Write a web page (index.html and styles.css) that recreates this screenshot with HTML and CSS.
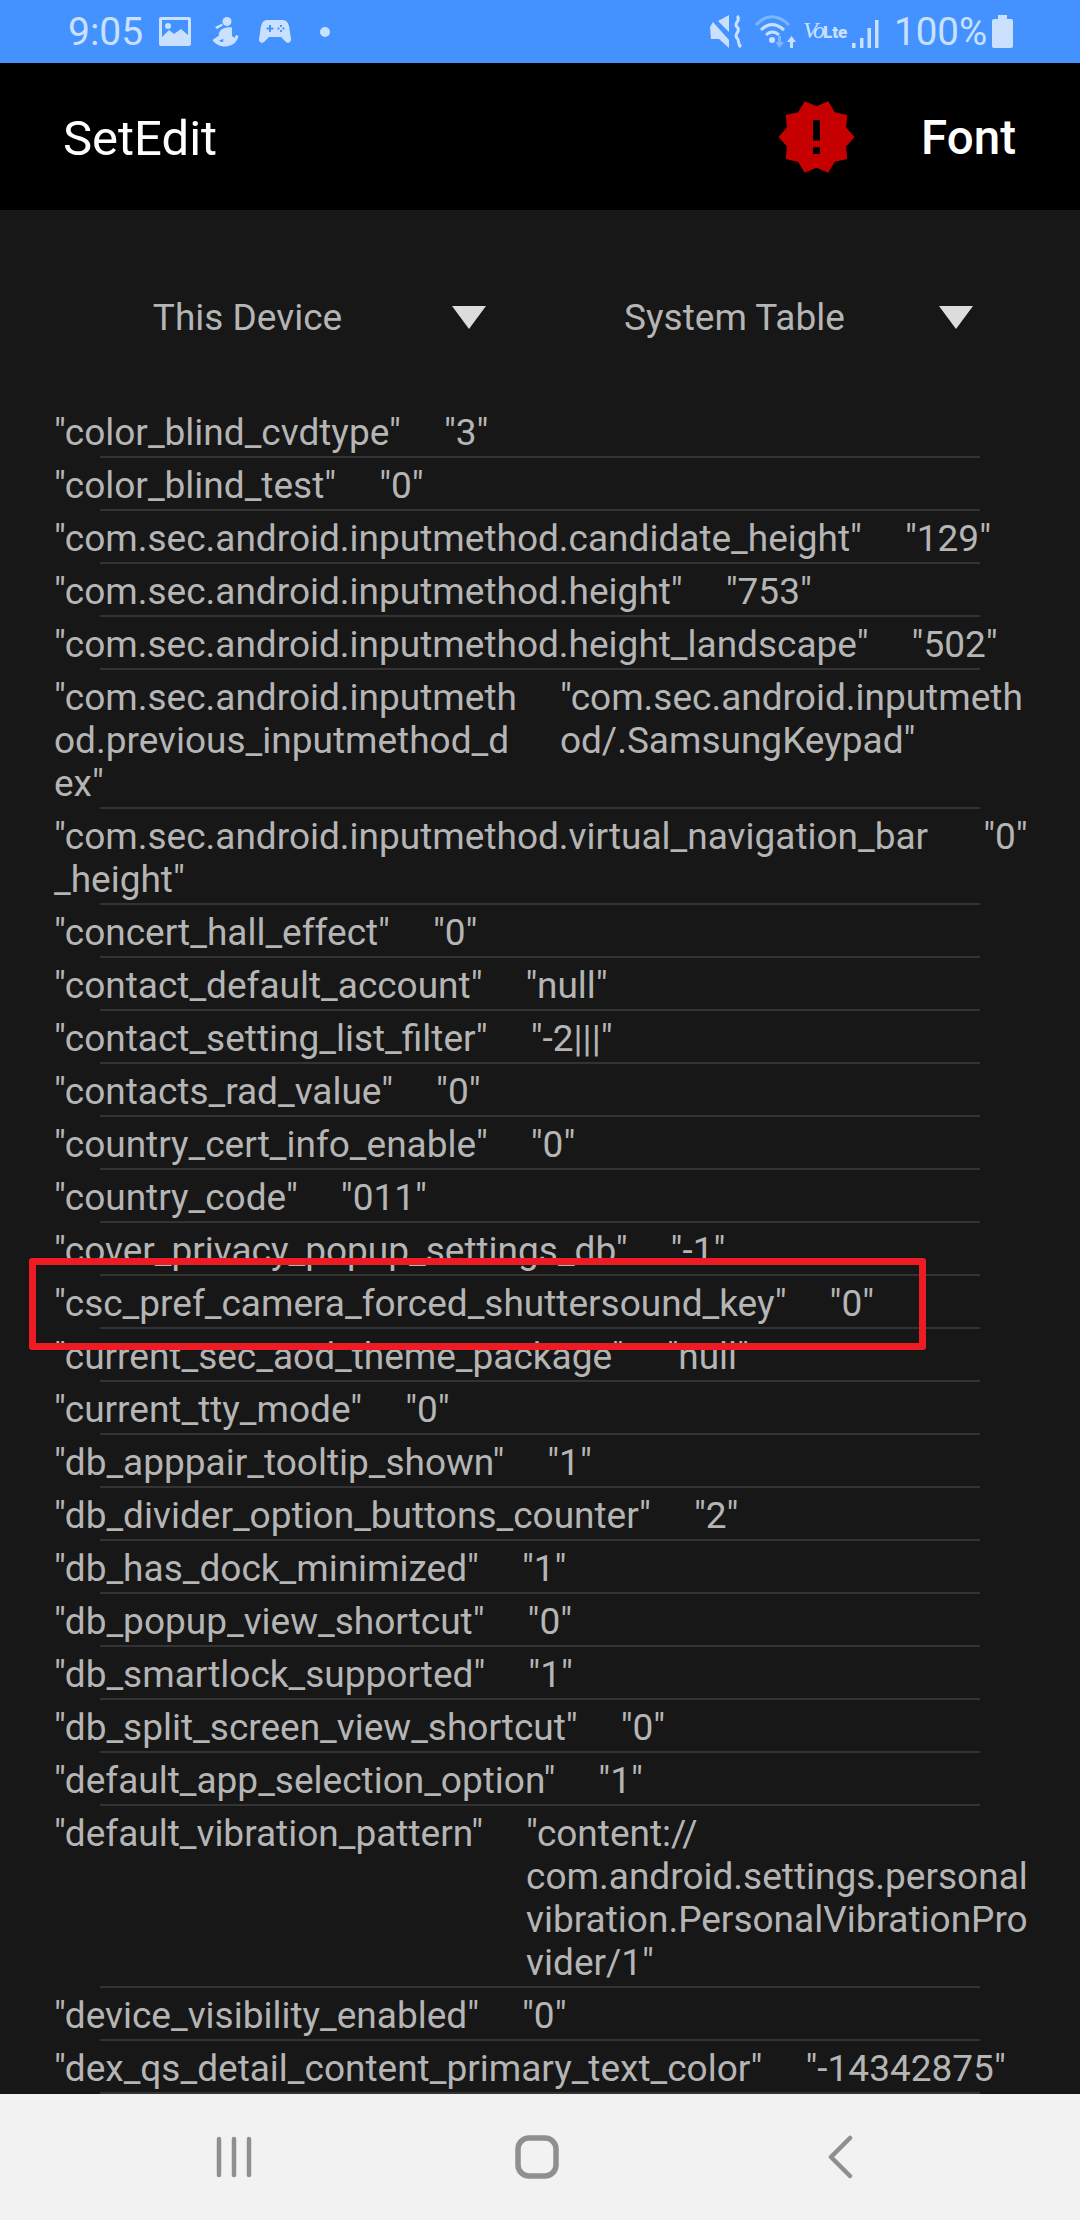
FILE: index.html
```html
<!DOCTYPE html>
<html lang="en">
<head>
    <meta charset="UTF-8">
    <title>SetEdit</title>
    <link rel="stylesheet" href="styles.css">
</head>
<body>
    <div class="status-bar">
        <span class="clock">9:05</span>
        <svg class="ic-picture" width="32" height="29" viewBox="0 0 32 29"><path fill-rule="evenodd" d="M2 0H30A2 2 0 0 1 32 2V27A2 2 0 0 1 30 29H2A2 2 0 0 1 0 27V2A2 2 0 0 1 2 0ZM3 3V20L10 13 15 17 22 12 29 18V3Z"/><circle cx="9" cy="9" r="3"/></svg>
        <svg class="ic-person" width="27" height="30" viewBox="0 0 27 30"><circle cx="15" cy="4.500" r="4.500"/><path d="M3 10 10 6.500 11 8.500 5 12Z"/><path fill-rule="evenodd" d="M8 14C10 11 15 9.500 20 10.500V19L22.500 21C23 20 23.500 19 24 18L26.500 19C25 26 19 29.500 13 29.500 8 29.500 3 27 .5 23L7 18.500C6.500 17 7 15.500 8 14ZM7 23.500C8.500 24.500 10 25 11 25L11.500 22Z"/></svg>
        <svg class="ic-pad" width="32" height="24" viewBox="0 0 32 24"><path fill-rule="evenodd" d="M8 0H24C27 0 29 2 30 6L32 19C32.400 22 29 24 27 22L22 17H10L5 22C3 24-.4 22 0 19L2 6C3 2 5 0 8 0ZM10 5V7.500H7.500V9.500H10V12H12V9.500H14.500V7.500H12V5ZM21 5V7H23V5ZM21 10V12H23V10ZM18.500 7.500V9.500H20.500V7.500ZM23.500 7.500V9.500H25.500V7.500Z"/></svg>
        <span class="dot"></span>
        <span class="spacer"></span>
        <svg class="ic-mute" width="33" height="33" viewBox="0 0 33 33"><path d="M0 12 3 7 19 25V33L9 24H1ZM8 6 19 0V17Z"/><path class="wave" d="M27 1C32 5 23 8 27 12 32 16 23 19 27 23 30 26 27 29 31 32" fill="none"/></svg>
        <svg class="ic-wifi" width="44" height="33" viewBox="0 0 44 33"><path class="faint-line" d="M2 10C12-1 24-1 35 10" fill="none"/><path class="line" d="M7 15C14 8 22 8 30 15M12 20C16 16 21 16 25 20" fill="none"/><circle cx="18" cy="25" r="3"/><path class="faint" d="M24 21H27V27H30L25.500 33 21 27H24Z"/><path d="M36 33V27H33L37.500 21 42 27H39V33Z"/></svg>
        <span class="volte"><i>Vo</i><b>Lte</b></span>
        <svg class="ic-signal" width="27" height="28" viewBox="0 0 27 28"><rect x="0" y="23" width="3.500" height="5"/><rect x="8" y="18" width="3.500" height="10"/><rect x="15.500" y="8" width="3.500" height="20"/><rect x="23" y="0" width="3.500" height="28"/></svg>
        <span class="battery-text">100%</span>
        <svg class="ic-battery" width="21" height="33" viewBox="0 0 21 33"><path d="M6 0H15V4H19A2 2 0 0 1 21 6V31A2 2 0 0 1 19 33H2A2 2 0 0 1 0 31V6A2 2 0 0 1 2 4H6Z"/></svg>
    </div>

    <header class="app-bar">
        <h1>SetEdit</h1>
        <svg class="warn" width="83" height="82" viewBox="0 0 24 24" preserveAspectRatio="none"><path d="M23 12l-2.440-2.780.340-3.680-3.610-.820-1.890-3.180L12 3 8.600 1.540 6.710 4.720l-3.610.810.340 3.680L1 12l2.440 2.780-.340 3.690 3.610.820 1.890 3.180L12 21l3.400 1.460 1.890-3.180 3.610-.820-.340-3.680L23 12zm-10 5h-2v-2h2v2zm0-4h-2V7h2v6z"/></svg>
        <span class="font-btn">Font</span>
    </header>

    <main class="content">
        <div class="spinners">
            <div class="spinner"><span>This Device</span><i class="arrow"></i></div>
            <div class="spinner"><span>System Table</span><i class="arrow"></i></div>
        </div>
        <ul class="settings">
            <li><span>"color_blind_cvdtype"</span><span>"3"</span></li>
            <li><span>"color_blind_test"</span><span>"0"</span></li>
            <li><span>"com.sec.android.inputmethod.candidate_height"</span><span>"129"</span></li>
            <li><span>"com.sec.android.inputmethod.height"</span><span>"753"</span></li>
            <li><span>"com.sec.android.inputmethod.height_landscape"</span><span>"502"</span></li>
            <li><span>"com.sec.android.inputmeth<br>od.previous_inputmethod_d<br>ex"</span><span>"com.sec.android.inputmeth<br>od/.SamsungKeypad"</span></li>
            <li><span>"com.sec.android.inputmethod.virtual_navigation_bar<br>_height"</span><span class="pushed">"0"</span></li>
            <li><span>"concert_hall_effect"</span><span>"0"</span></li>
            <li><span>"contact_default_account"</span><span>"null"</span></li>
            <li><span>"contact_setting_list_filter"</span><span>"-2|||"</span></li>
            <li><span>"contacts_rad_value"</span><span>"0"</span></li>
            <li><span>"country_cert_info_enable"</span><span>"0"</span></li>
            <li><span>"country_code"</span><span>"011"</span></li>
            <li><span>"cover_privacy_popup_settings_db"</span><span>"-1"</span></li>
            <li><span>"csc_pref_camera_forced_shuttersound_key"</span><span>"0"</span></li>
            <li><span>"current_sec_aod_theme_package"</span><span>"null"</span></li>
            <li><span>"current_tty_mode"</span><span>"0"</span></li>
            <li><span>"db_apppair_tooltip_shown"</span><span>"1"</span></li>
            <li><span>"db_divider_option_buttons_counter"</span><span>"2"</span></li>
            <li><span>"db_has_dock_minimized"</span><span>"1"</span></li>
            <li><span>"db_popup_view_shortcut"</span><span>"0"</span></li>
            <li><span>"db_smartlock_supported"</span><span>"1"</span></li>
            <li><span>"db_split_screen_view_shortcut"</span><span>"0"</span></li>
            <li><span>"default_app_selection_option"</span><span>"1"</span></li>
            <li><span>"default_vibration_pattern"</span><span>"content://<br>com.android.settings.personal<br>vibration.PersonalVibrationPro<br>vider/1"</span></li>
            <li><span>"device_visibility_enabled"</span><span>"0"</span></li>
            <li><span>"dex_qs_detail_content_primary_text_color"</span><span>"-14342875"</span></li>
        </ul>
        <div class="highlight"></div>
    </main>

    <nav class="nav-bar">
        <svg width="36" height="42" viewBox="0 0 36 42"><path d="M3 3V39M18 3V39M33 3V39" fill="none" stroke-width="4.500" stroke-linecap="round"/></svg>
        <svg width="44" height="44" viewBox="0 0 44 44"><rect x="3" y="3" width="38" height="38" rx="11" fill="none" stroke-width="5.500"/></svg>
        <svg width="28" height="44" viewBox="0 0 28 44"><path d="M24 3 5 22 24 41" fill="none" stroke-width="4.500" stroke-linecap="round" stroke-linejoin="round"/></svg>
    </nav>
</body>
</html>
```

FILE: styles.css
```css
* {
    margin: 0;
    padding: 0;
    box-sizing: border-box;
}

body {
    width: 1080px;
    height: 2220px;
    display: flex;
    flex-direction: column;
    overflow: hidden;
    font-family: Roboto, sans-serif;
    background: #171717;
}

.status-bar {
    height: 63px;
    flex: none;
    display: flex;
    align-items: center;
    padding: 0 67px 0 68px;
    background: #4392ff;
    color: #c9e0ff;
}

.status-bar svg {
    flex: none;
    fill: #c9e0ff;
    stroke: #c9e0ff;
    stroke-width: 0;
}

.status-bar .line,
.status-bar .wave {
    stroke-width: 3;
}

.status-bar .faint {
    fill: #7fb5ff;
}

.status-bar .faint-line {
    stroke: #7fb5ff;
    stroke-width: 3;
}

.clock {
    width: 91px;
    font-size: 39px;
}

.ic-person {
    margin-left: 21px;
}

.ic-pad {
    margin-left: 20px;
}

.dot {
    width: 10px;
    height: 10px;
    margin-left: 29px;
    border-radius: 50%;
    background: #c9e0ff;
}

.spacer {
    flex: 1;
}

.ic-wifi {
    margin-left: 11px;
}

.volte {
    width: 46px;
    margin-left: 5px;
    white-space: nowrap;
    line-height: 30px;
}

.volte i {
    font-family: "Liberation Serif", serif;
    font-size: 24px;
    letter-spacing: -2px;
}

.volte b {
    font-size: 17px;
    font-weight: 900;
}

.ic-signal {
    margin-left: 3px;
    margin-top: 4px;
}

.battery-text {
    width: 92px;
    margin-left: 15px;
    font-size: 38.500px;
    white-space: nowrap;
}

.ic-battery {
    margin-left: 6px;
}

.app-bar {
    height: 147px;
    flex: none;
    display: flex;
    align-items: center;
    padding: 0 64px 0 63px;
    background: #000;
    color: #fff;
}

.app-bar h1 {
    flex: 1;
    padding-top: 3px;
    font-size: 49px;
    font-weight: 400;
}

.warn {
    margin-right: 63px;
    fill: #c60000;
}

.font-btn {
    padding-top: 3px;
    font-size: 47.500px;
    font-weight: 500;
}

.content {
    flex: 1;
    position: relative;
    overflow: hidden;
    color: #b5b5b5;
}

.spinners {
    height: 195px;
    display: flex;
    padding: 85px 0 0 53px;
}

.spinner {
    width: 487px;
    height: 44px;
    display: flex;
    align-items: center;
    padding-right: 54px;
    font-size: 37px;
}

.spinner span {
    flex: 1;
    text-align: center;
}

.arrow {
    margin-left: 10px;
    border-left: 17.500px solid transparent;
    border-right: 17.500px solid transparent;
    border-top: 23px solid #dcdcdc;
}

.settings {
    list-style: none;
    font-size: 37px;
    line-height: 43px;
}

.settings li {
    display: flex;
    flex-wrap: wrap;
    column-gap: 43px;
    padding: 6px 0 0 54px;
}

.settings li::after {
    content: "";
    flex: none;
    width: 880px;
    height: 2px;
    margin: 2px 0 0 46px;
    background: #333;
}

.settings li span {
    white-space: nowrap;
}

.settings li .pushed {
    margin-left: 12px;
}

.highlight {
    position: absolute;
    left: 29px;
    top: 1048px;
    width: 897px;
    height: 92px;
    border: 7px solid #ed1c24;
    border-radius: 3px;
}

.nav-bar {
    height: 126px;
    flex: none;
    display: grid;
    grid-template-columns: repeat(3, 303px);
    justify-content: center;
    justify-items: center;
    align-items: center;
    padding-right: 6px;
    background: #f2f2f2;
}

.nav-bar svg {
    stroke: #8f8f8f;
}
```
